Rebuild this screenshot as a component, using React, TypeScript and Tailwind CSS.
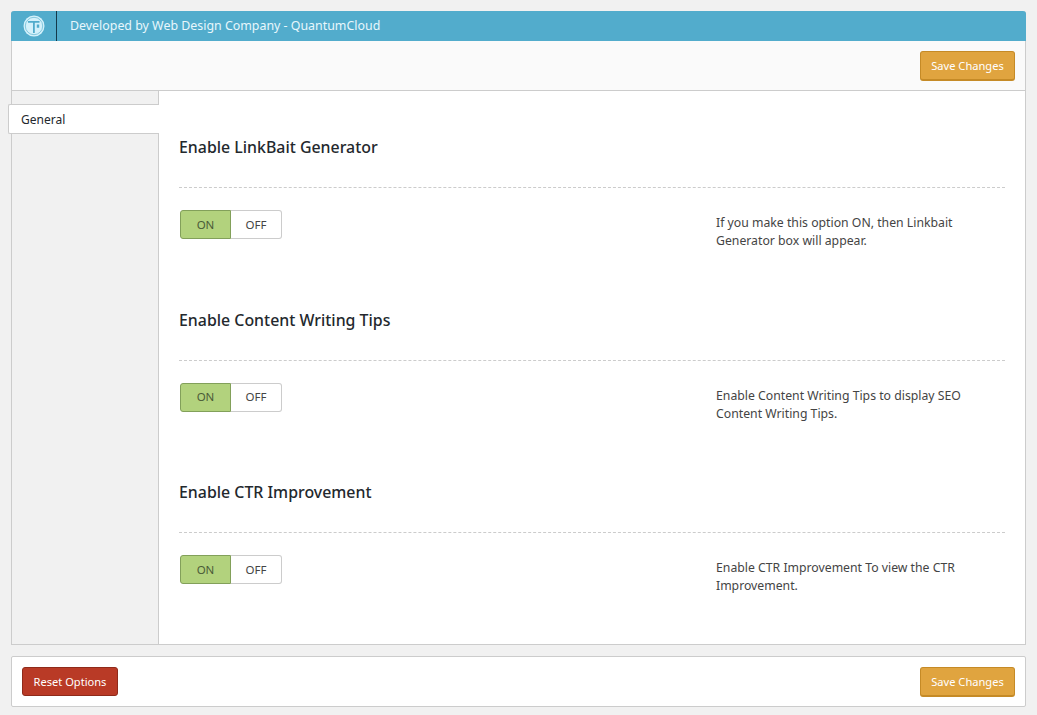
const FONT = "font-['Noto_Sans','Open_Sans',sans-serif]";

const options = [
  {
    title: "Enable LinkBait Generator",
    description: "If you make this option ON, then Linkbait Generator box will appear.",
  },
  {
    title: "Enable Content Writing Tips",
    description: "Enable Content Writing Tips to display SEO Content Writing Tips.",
  },
  {
    title: "Enable CTR Improvement",
    description: "Enable CTR Improvement To view the CTR Improvement.",
  },
];

const Logo = () => (
  <svg width="22" height="22" viewBox="0 0 22 22" fill="none">
    <circle cx="11" cy="11" r="10.5" fill="#d4f1fb" />
    <circle cx="11" cy="11" r="8.7" fill="#d4f1fb" stroke="#6fbcd6" strokeWidth="0.8" />
    <path d="M5 6h11.500v1.700H11.800V18H10V7.700H5z" fill="#52accc" />
    <path d="M13.800 9.500h2.400v3.200h-2.400z" fill="#52accc" />
  </svg>
);

const SaveButton = () => (
  <button className="h-[30px] w-[95px] rounded-[3px] border border-[#c58a26] border-b-2 bg-[#e0a43f] pt-[2px] text-[11.100px] text-white">
    Save Changes
  </button>
);

const Toggle = () => (
  <div className="flex h-[29px] w-[102px] text-[11.500px]">
    <div className="flex w-[51px] items-center justify-center rounded-l-[3px] border border-[#82a05a] bg-[#b2d27d] text-[#4b5b38]">
      ON
    </div>
    <div className="flex w-[51px] items-center justify-center rounded-r-[3px] border border-l-0 border-[#cccccc] bg-white text-[#444444]">
      OFF
    </div>
  </div>
);

const OptionRow = ({ title, description }: { title: string; description: string }) => (
  <div className="h-[172.500px]">
    <h2 className="flex h-[70px] items-end pb-[2px] text-[15.900px] leading-[24px] font-medium text-[#23282d]">
      {title}
    </h2>
    <div className="mt-[26px] border-t border-dashed border-[#cccccc]" />
    <div className="mt-[22px] flex pl-px">
      <Toggle />
      <p className="ml-[434px] w-[270px] pt-[4px] text-[12.250px] leading-[18px] text-[#444444]">
        {description}
      </p>
    </div>
  </div>
);

export default function App() {
  return (
    <div className={`${FONT} min-h-[715px] bg-[#f1f1f1] px-[11px] pt-[11px]`}>
      <div className="rounded-t-[3px] border-x border-b border-[#cccccc]">
        <div className="-mx-px flex h-[30px] items-center rounded-t-[3px] bg-[#52accc]">
          <div className="flex h-full w-[46px] items-center justify-center border-r border-[#14394a]">
            <Logo />
          </div>
          <span className="ml-[13px] text-[12.400px] text-[#e8f7fc]">
            Developed by Web Design Company - QuantumCloud
          </span>
        </div>
        <div className="flex h-[50px] items-center justify-end border-b border-[#cccccc] bg-[#fafafa] pr-[10px]">
          <SaveButton />
        </div>
        <div className="flex h-[553px]">
          <div className="w-[147px] shrink-0 border-r border-[#cccccc] bg-[#f1f1f1] pt-[13px]">
            <div className="-mr-px -ml-[4px] flex h-[30px] items-center rounded-l-[2px] border-y border-l border-[#cccccc] bg-white pt-px pl-[12px] text-[12px] text-[#23282d]">
              General
            </div>
          </div>
          <div className="flex-1 bg-white pr-[20px] pl-[20px]">
            {options.map((option) => (
              <OptionRow key={option.title} {...option} />
            ))}
          </div>
        </div>
      </div>
      <div className="mt-[11px] flex h-[51px] items-center justify-between rounded-[2px] border border-[#cccccc] bg-white px-[10px]">
        <button className="h-[29px] w-[96px] rounded-[3px] border border-[#8f2a1a] bg-[#b93a26] pt-px text-[11.100px] text-white">
          Reset Options
        </button>
        <SaveButton />
      </div>
    </div>
  );
}
